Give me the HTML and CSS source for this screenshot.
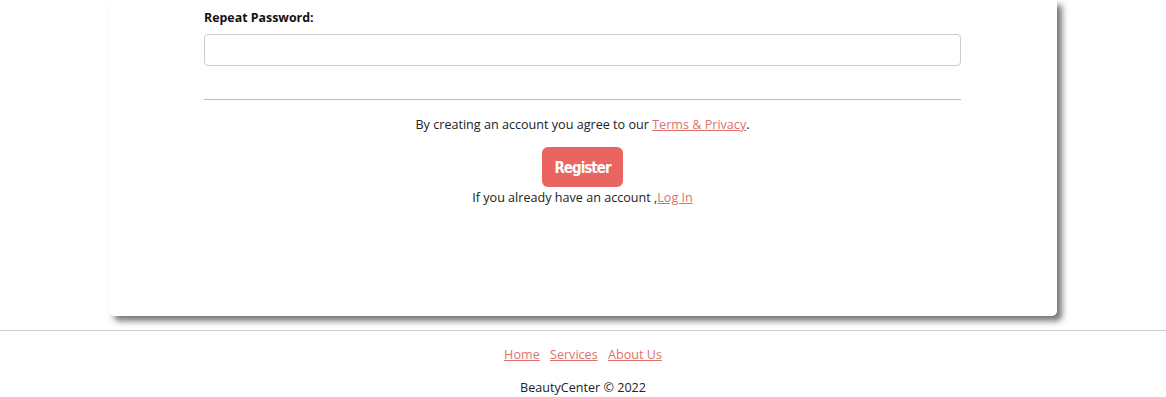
FILE: index.html
```html
<!DOCTYPE html>
<html>
<head>
    <title>BeautyCenter - Register</title>
    <link rel="stylesheet" href="styles.css">
</head>
<body>
    <div class="card">
        <form class="register-form">
            <label for="psw-repeat" class="field-label">Repeat Password:</label>
            <input type="password" id="psw-repeat" class="field-input">
            <hr class="divider">
            <p class="terms">By creating an account you agree to our <a href="#">Terms &amp; Privacy</a>.</p>
            <div class="actions">
                <button type="submit" class="register-btn">Register</button>
            </div>
            <p class="signin">If you already have an account ,<a href="#">Log In</a></p>
        </form>
    </div>

    <footer class="site-footer">
        <nav class="footer-links">
            <a href="#">Home</a>
            <a href="#">Services</a>
            <a href="#">About Us</a>
        </nav>
        <p class="copyright">BeautyCenter &copy; 2022</p>
    </footer>
</body>
</html>
```

FILE: styles.css
```css
body {
    font-family: "Open Sans", "Noto Sans", sans-serif;
    font-size: 12.6px;
    color: #222;
    margin: 0;
    background: #fff;
}
a {
    color: #e0706c;
}
.card {
    width: 948px;
    height: 316px;
    margin: 0 auto;
    box-sizing: border-box;
    background: #fff;
    padding: 8px 96px 0 95px;
    border-radius: 0 0 5px 5px;
    box-shadow: 5px 5px 6px #777;
}
.field-label {
    display: block;
    font-weight: bold;
    font-size: 12.4px;
    line-height: 20px;
    color: #111;
    margin-bottom: 6px;
}
.field-input {
    display: block;
    width: 100%;
    height: 32px;
    box-sizing: border-box;
    border: 1px solid #ccc;
    border-radius: 4px;
}
.divider {
    border: none;
    border-top: 1px solid #bbb;
    margin: 33px 0 0;
}
.terms {
    text-align: center;
    margin: 15px 0 0;
    line-height: 20px;
}
.actions {
    display: flex;
    justify-content: center;
    margin-top: 12px;
}
.register-btn {
    font-family: "DejaVu Sans", sans-serif;
    font-stretch: condensed;
    font-size: 15px;
    font-weight: bold;
    letter-spacing: -1px;
    color: #fff;
    background-color: #ea6461;
    border: none;
    border-radius: 6px;
    width: 81px;
    height: 40px;
    padding: 2px 0 0;
    cursor: pointer;
}
.signin {
    text-align: center;
    margin: 1px 0 0;
    line-height: 20px;
}
.site-footer {
    margin-top: 14px;
    border-top: 1px solid #ccc;
    text-align: center;
}
.footer-links {
    padding-top: 14px;
    line-height: 20px;
}
.footer-links a {
    margin: 0 3.5px;
}
.copyright {
    margin: 13px 0 0;
    line-height: 20px;
}
```
